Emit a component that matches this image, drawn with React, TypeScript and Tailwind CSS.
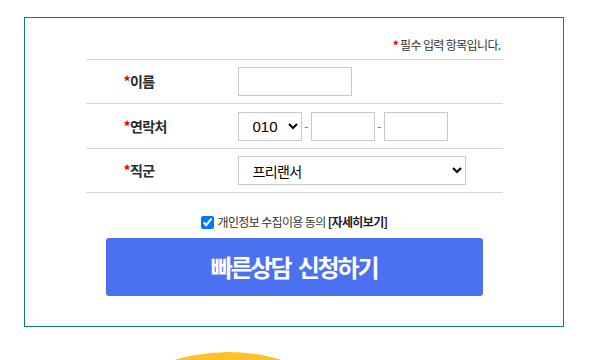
export default function App() {
  const rows = "grid grid-cols-[153px_1fr] items-center h-[44px] border-b border-[#d6d6d6]";
  const label = "pl-[38px] text-[14px] font-semibold text-[#2a2a2a]";
  const box = "h-[29px] border border-[#c9c9c9] bg-white";

  return (
    <div
      className="w-[595px] h-[360px] overflow-hidden bg-white pt-[17px] tracking-[-0.04em]"
      style={{ fontFamily: '"Noto Sans CJK KR", "Noto Sans", sans-serif' }}
    >
      <div className="mx-[24px] w-[540px] h-[310px] border border-[#11798a] pt-[1px]">
        <div className="mx-auto w-[417px]">
          <div className="flex justify-end items-end h-[41px] pb-[5px] pr-[2px] border-b border-[#d6d6d6] text-[12px] text-[#333]">
            <span className="text-[#e00000] font-bold mr-[2px]">*</span>
            필수 입력 항목입니다.
          </div>

          <div className={rows}>
            <div className={label}>
              <span className="text-[#e00000]">*</span>이름
            </div>
            <div className="-ml-[1px]">
              <input type="text" className={`${box} w-[114px]`} />
            </div>
          </div>

          <div className={`${rows} h-[45px]`}>
            <div className={label}>
              <span className="text-[#e00000]">*</span>연락처
            </div>
            <div className="-ml-[1px] flex items-center text-[12px] text-[#666]">
              <select
                className={`${box} w-[64px] pl-[10px] text-[15px] text-black tracking-normal`}
                style={{ fontFamily: '"Liberation Sans", Arial, sans-serif' }}
              >
                <option>010</option>
                <option>011</option>
                <option>016</option>
              </select>
              <span className="w-[9px] text-center">-</span>
              <input type="text" className={`${box} w-[64px]`} />
              <span className="w-[9px] text-center">-</span>
              <input type="text" className={`${box} w-[64px]`} />
            </div>
          </div>

          <div className={rows}>
            <div className={label}>
              <span className="text-[#e00000]">*</span>직군
            </div>
            <div className="-ml-[1px]">
              <select className={`${box} w-[228px] pl-[10px] text-[14px] text-black`}>
                <option>프리랜서</option>
                <option>직장인</option>
                <option>학생</option>
              </select>
            </div>
          </div>
        </div>

        <div className="flex justify-center items-center gap-[4px] mt-[20px] text-[12px] text-[#333]">
          <input type="checkbox" defaultChecked className="w-[13px] h-[13px]" />
          <span>
            개인정보 수집이용 동의 <b className="font-bold text-[#222]">[자세히보기]</b>
          </span>
        </div>

        <div className="flex justify-center mt-[7px]">
          <button className="w-[377px] h-[58px] rounded-[3px] bg-[#4b70f2] text-white text-[24px] font-bold tracking-[-0.09em] [word-spacing:4px]">
            빠른상담 신청하기
          </button>
        </div>
      </div>

      <div className="ml-[45px] mt-[25px] w-[366px] h-[366px] rounded-full bg-[#ffc12a]" />
    </div>
  );
}
